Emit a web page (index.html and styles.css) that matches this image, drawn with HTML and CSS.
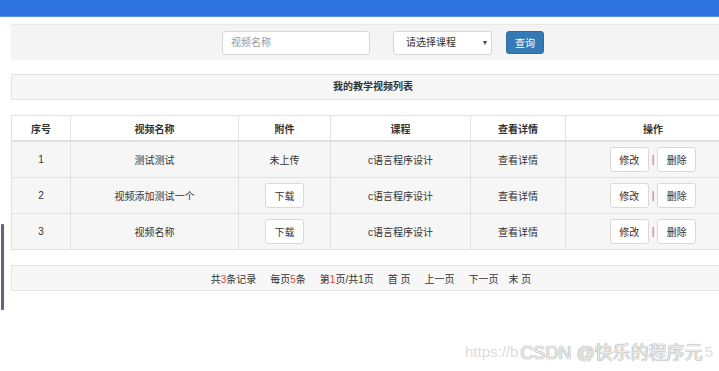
FILE: index.html
```html
<!DOCTYPE html>
<html>
<head>
  <title>我的教学视频列表</title>
  <link rel="stylesheet" href="styles.css">
</head>
<body>
  <div class="topbar"></div>
  <div class="main">
    <form class="search-bar">
      <input type="text" class="search-input" placeholder="视频名称">
      <div class="select-wrap">
        <select class="course-select">
          <option>请选择课程</option>
          <option>c语言程序设计</option>
        </select>
        <i class="caret"></i>
      </div>
      <button type="button" class="btn-primary">查询</button>
    </form>

    <div class="panel-title">我的教学视频列表</div>

    <table class="video-table">
      <colgroup>
        <col style="width:59px">
        <col style="width:168px">
        <col style="width:92px">
        <col style="width:140px">
        <col style="width:95px">
        <col>
      </colgroup>
      <thead>
        <tr>
          <th>序号</th>
          <th>视频名称</th>
          <th>附件</th>
          <th>课程</th>
          <th>查看详情</th>
          <th>操作</th>
        </tr>
      </thead>
      <tbody>
        <tr>
          <td>1</td>
          <td>测试测试</td>
          <td>未上传</td>
          <td>c语言程序设计</td>
          <td>查看详情</td>
          <td><button class="btn">修改</button><span class="sep">|</span><button class="btn">删除</button></td>
        </tr>
        <tr>
          <td>2</td>
          <td>视频添加测试一个</td>
          <td><button class="btn">下载</button></td>
          <td>c语言程序设计</td>
          <td>查看详情</td>
          <td><button class="btn">修改</button><span class="sep">|</span><button class="btn">删除</button></td>
        </tr>
        <tr>
          <td>3</td>
          <td>视频名称</td>
          <td><button class="btn">下载</button></td>
          <td>c语言程序设计</td>
          <td>查看详情</td>
          <td><button class="btn">修改</button><span class="sep">|</span><button class="btn">删除</button></td>
        </tr>
      </tbody>
    </table>

    <div class="pager">
      <span>共<em>3</em>条记录</span>
      <span>每页<em>5</em>条</span>
      <span>第<em>1</em>页/共1页</span>
      <span>首&nbsp;页</span>
      <span>上一页</span>
      <span>下一页</span>
      <span class="last">末&nbsp;页</span>
    </div>
  </div>

  <div class="side-scroll"></div>
  <div class="watermark">
    <span class="wm-url">https://b</span>
    <span class="wm-name">CSDN @快乐的程序元</span>
    <span class="wm-url">5</span>
  </div>
</body>
</html>
```

FILE: styles.css
```css
html {
  overflow: hidden;
}
body {
  margin: 0;
  font-family: "Liberation Sans", "Noto Sans CJK SC", sans-serif;
  font-size: 10px;
  color: #333;
  background: #fff;
}
.topbar {
  height: 16px;
  background: #3074e1;
  border-bottom: 1px solid #5a8fe6;
}
.main {
  padding: 7px 0 60px 11px;
  border-left: 1px solid #e8e8e8;
  width: 730px;
  margin-left: -1px;
}
.search-bar {
  display: flex;
  align-items: center;
  height: 35px;
  margin: 0;
  padding-left: 211px;
  background: #f4f4f4;
  border-top: 1px solid #e8e8e8;
}
.search-input {
  width: 148px;
  height: 24px;
  padding: 0 8px;
  border: 1px solid #d6d6d6;
  border-radius: 3px;
  box-sizing: border-box;
  font-family: inherit;
  font-size: 10px;
  background: #fff;
}
.search-input::placeholder {
  color: #999;
}
.select-wrap {
  position: relative;
  margin-left: 23px;
}
.course-select {
  -webkit-appearance: none;
  appearance: none;
  width: 99px;
  height: 24px;
  padding: 0 12px;
  border: 1px solid #d6d6d6;
  border-radius: 3px;
  background: #fff;
  font-family: inherit;
  font-size: 10px;
  color: #333;
  display: block;
}
.caret {
  position: absolute;
  right: 5px;
  top: 10px;
  border-left: 2px solid transparent;
  border-right: 2px solid transparent;
  border-top: 4px solid #444;
}
.btn-primary {
  margin-left: 14px;
  width: 38px;
  height: 23px;
  border: 1px solid #2e6da4;
  border-radius: 3px;
  background: #337ab7;
  color: #fff;
  font-family: inherit;
  font-size: 10px;
  padding: 0;
}
.panel-title {
  margin-top: 14px;
  height: 24px;
  line-height: 24px;
  background: #f7f7f7;
  border: 1px solid #e3e3e3;
  text-align: center;
  font-weight: bold;
  color: #333;
  padding-right: 6px;
}
.video-table {
  margin-top: 15px;
  width: 100%;
  border-collapse: collapse;
  table-layout: fixed;
}
.video-table th,
.video-table td {
  border: 1px solid #e2e2e2;
  text-align: center;
  padding: 0;
  color: #333;
  font-size: 10px;
}
.video-table th {
  height: 24px;
  font-weight: bold;
  background: #fff;
  border-bottom: 2px solid #e0e0e0;
}
.video-table td {
  height: 35px;
  background: #f6f6f6;
}
.btn {
  width: 39px;
  height: 25px;
  border: 1px solid #d9d9d9;
  border-radius: 3px;
  background: #fff;
  font-family: inherit;
  font-size: 10px;
  color: #333;
  padding: 0;
  vertical-align: middle;
}
.sep {
  display: inline-block;
  margin: 0 3px;
  color: #7b5ea7;
  vertical-align: middle;
}
.pager {
  margin-top: 15px;
  height: 24px;
  display: flex;
  justify-content: center;
  align-items: center;
  gap: 14px;
  padding-right: 10px;
  background: #f7f7f7;
  border: 1px solid #e3e3e3;
}
.pager em {
  font-style: normal;
  color: #f33;
}
.pager .last {
  margin-left: -4px;
}
.side-scroll {
  position: absolute;
  left: 1px;
  top: 224px;
  width: 3px;
  height: 86px;
  background: #5f6581;
  border-radius: 1px;
}
.watermark {
  position: absolute;
  left: 465px;
  top: 338px;
  display: flex;
  align-items: center;
  white-space: nowrap;
}
.wm-url {
  font-size: 15px;
  color: #dcdcdc;
}
.wm-name {
  margin: 0 2px;
  font-size: 18px;
  color: #ececec;
  text-shadow: 0 0 1px #999, 0 0 1px #999;
}
```
